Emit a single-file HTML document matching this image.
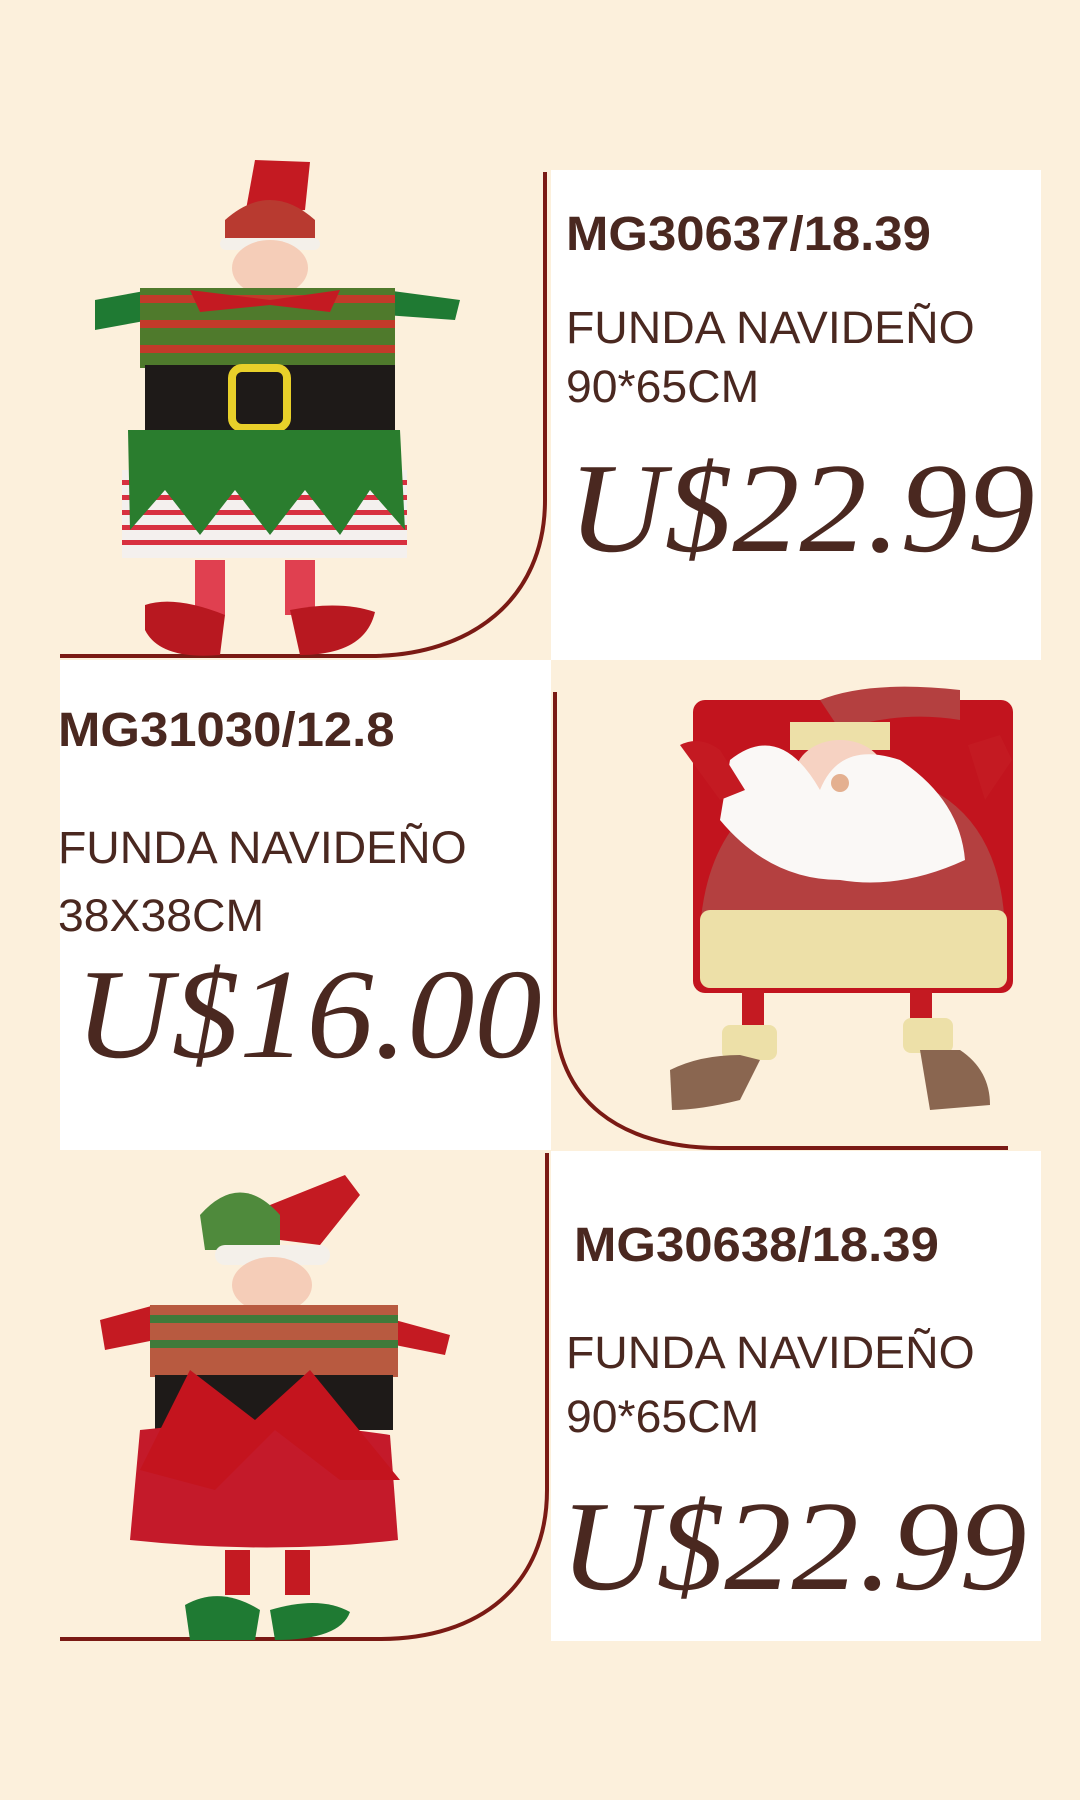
<!DOCTYPE html>
<html><head><meta charset="utf-8"><style>
*{margin:0;padding:0}
body{width:1080px;height:1800px;background:#fcf0dc;position:relative;overflow:hidden;font-family:"Liberation Sans",sans-serif;color:#4a2820}
.w{position:absolute;background:#fff}
.t{position:absolute;white-space:nowrap;line-height:1;transform-origin:left top}
.code{font-weight:bold;font-size:48px;transform:scaleX(1.06)}
.d{font-size:45px;transform:scaleX(1.03)}
.p{font-family:"Liberation Serif",serif;font-style:italic;font-size:128px;transform:scaleX(1.05)}
svg{position:absolute;left:0;top:0}
</style></head><body>
<div class="w" style="left:551px;top:170px;width:490px;height:490px"></div>
<div class="w" style="left:60px;top:660px;width:491px;height:490px"></div>
<div class="w" style="left:551px;top:1151px;width:490px;height:490px"></div>
<svg width="1080" height="1800" viewBox="0 0 1080 1800">
<g fill="none" stroke="#7a1a14" stroke-width="4">
<path d="M545 172 V500 C545 600 470 656 370 656 H60"/>
<path d="M555 692 V1010 C555 1100 620 1148 720 1148 H1008"/>
<path d="M547 1153 V1490 C547 1585 480 1639 380 1639 H60"/>
</g>
<g>
<path d="M255 160 L310 162 L305 210 L245 215Z" fill="#c41a22"/>
<path d="M225 220 Q270 180 315 220 L315 245 L225 245Z" fill="#b83a30"/>
<rect x="220" y="238" width="100" height="12" rx="6" fill="#f4f0ea"/>
<ellipse cx="270" cy="268" rx="38" ry="28" fill="#f5cdb8"/>
<path d="M95 300 L150 290 L150 320 L95 330Z" fill="#1f7a33"/>
<path d="M385 290 L460 300 L455 320 L385 315Z" fill="#1f7a33"/>
<rect x="140" y="288" width="255" height="80" fill="#4f7a2c"/>
<rect x="140" y="295" width="255" height="8" fill="#c23a2a"/>
<rect x="140" y="320" width="255" height="8" fill="#c23a2a"/>
<rect x="140" y="345" width="255" height="8" fill="#c23a2a"/>
<path d="M190 290 L270 300 L340 290 L330 312 L270 305 L200 312Z" fill="#c41a22"/>
<rect x="145" y="365" width="250" height="65" fill="#1e1a18"/>
<rect x="232" y="368" width="55" height="60" rx="10" fill="none" stroke="#e8d02a" stroke-width="8"/>
<rect x="122" y="470" width="285" height="88" fill="#f4f0ee"/>
<g fill="#d83040"><rect x="122" y="480" width="285" height="5"/><rect x="122" y="495" width="285" height="5"/><rect x="122" y="510" width="285" height="5"/><rect x="122" y="525" width="285" height="5"/><rect x="122" y="540" width="285" height="5"/></g>
<path d="M128 430 H400 L405 530 L370 490 L340 535 L305 490 L270 535 L235 490 L200 535 L165 490 L130 530Z" fill="#2a7d2e"/>
<rect x="195" y="560" width="30" height="55" fill="#e04050"/>
<rect x="285" y="560" width="30" height="55" fill="#e04050"/>
<path d="M145 605 Q175 595 225 615 L220 655 Q160 660 145 630Z" fill="#b81820"/>
<path d="M290 610 Q340 600 375 612 Q365 655 300 655Z" fill="#b81820"/>
</g>
<g>
<rect x="693" y="700" width="320" height="293" rx="12" fill="#c2141e"/>
<path d="M700 930 Q710 780 855 770 Q1000 780 1005 930Z" fill="#b44040"/>
<rect x="700" y="910" width="307" height="78" rx="10" fill="#ede0a8"/>
<path d="M820 700 Q870 680 960 690 L960 720 Q900 710 840 730Z" fill="#b44040"/>
<rect x="790" y="722" width="100" height="28" fill="#ede0a8"/>
<ellipse cx="840" cy="775" rx="45" ry="35" fill="#f6d2c2"/>
<path d="M730 760 Q780 720 820 790 Q840 740 900 760 Q960 800 965 860 Q900 890 840 880 Q770 880 720 820Z" fill="#faf8f6"/>
<circle cx="840" cy="783" r="9" fill="#e4b090"/>
<path d="M680 745 Q700 735 720 750 L745 790 L720 800Z" fill="#c41a22"/>
<path d="M968 745 L1000 735 L1012 760 L985 800Z" fill="#c41a22"/>
<rect x="742" y="990" width="22" height="45" fill="#c41a22"/>
<rect x="910" y="990" width="22" height="45" fill="#c41a22"/>
<rect x="722" y="1025" width="55" height="35" rx="8" fill="#ede0a8"/>
<rect x="903" y="1018" width="50" height="35" rx="8" fill="#ede0a8"/>
<path d="M670 1070 Q700 1055 740 1055 L760 1060 L740 1100 Q700 1110 672 1110Z" fill="#8a6650"/>
<path d="M920 1050 L960 1050 Q990 1070 990 1105 L930 1110Z" fill="#8a6650"/>
</g>
<g>
<path d="M270 1205 L345 1175 L360 1195 L320 1245 L280 1240Z" fill="#c41a22"/>
<path d="M200 1215 Q240 1170 280 1215 L280 1250 L205 1250Z" fill="#4f8a3c"/>
<rect x="215" y="1245" width="115" height="20" rx="10" fill="#f4f0ea"/>
<ellipse cx="272" cy="1285" rx="40" ry="28" fill="#f5cdb8"/>
<path d="M100 1320 L155 1305 L155 1340 L105 1350Z" fill="#c41a22"/>
<path d="M395 1320 L450 1335 L445 1355 L395 1345Z" fill="#c41a22"/>
<rect x="150" y="1305" width="248" height="72" fill="#b85a40"/>
<rect x="150" y="1315" width="248" height="8" fill="#3f7a3a"/>
<rect x="150" y="1340" width="248" height="8" fill="#3f7a3a"/>
<rect x="155" y="1375" width="238" height="55" fill="#1e1a18"/>
<path d="M140 1430 Q260 1415 390 1435 L398 1540 Q270 1555 130 1540Z" fill="#c41a2a"/>
<path d="M140 1470 L190 1370 L255 1420 L310 1370 L400 1480 L340 1480 L275 1430 L215 1490Z" fill="#c4141e"/>
<rect x="225" y="1550" width="25" height="45" fill="#c41a22"/>
<rect x="285" y="1550" width="25" height="45" fill="#c41a22"/>
<path d="M185 1605 Q220 1585 260 1610 L255 1640 L190 1640Z" fill="#1f7a33"/>
<path d="M270 1610 Q320 1595 350 1612 Q340 1640 275 1640Z" fill="#1f7a33"/>
</g>
</svg>
<div class="t code" style="left:566px;top:211px">MG30637/18.39</div>
<div class="t d" style="left:566px;top:305px">FUNDA NAVIDEÑO</div>
<div class="t d" style="left:566px;top:364px">90*65CM</div>
<div class="t p" style="left:568px;top:444px">U$22.99</div>

<div class="t code" style="left:58px;top:707px">MG31030/12.8</div>
<div class="t d" style="left:58px;top:825px">FUNDA NAVIDEÑO</div>
<div class="t d" style="left:58px;top:893px">38X38CM</div>
<div class="t p" style="left:75px;top:950px">U$16.00</div>

<div class="t code" style="left:574px;top:1222px">MG30638/18.39</div>
<div class="t d" style="left:566px;top:1330px">FUNDA NAVIDEÑO</div>
<div class="t d" style="left:566px;top:1394px">90*65CM</div>
<div class="t p" style="left:560px;top:1482px">U$22.99</div>
</body></html>
